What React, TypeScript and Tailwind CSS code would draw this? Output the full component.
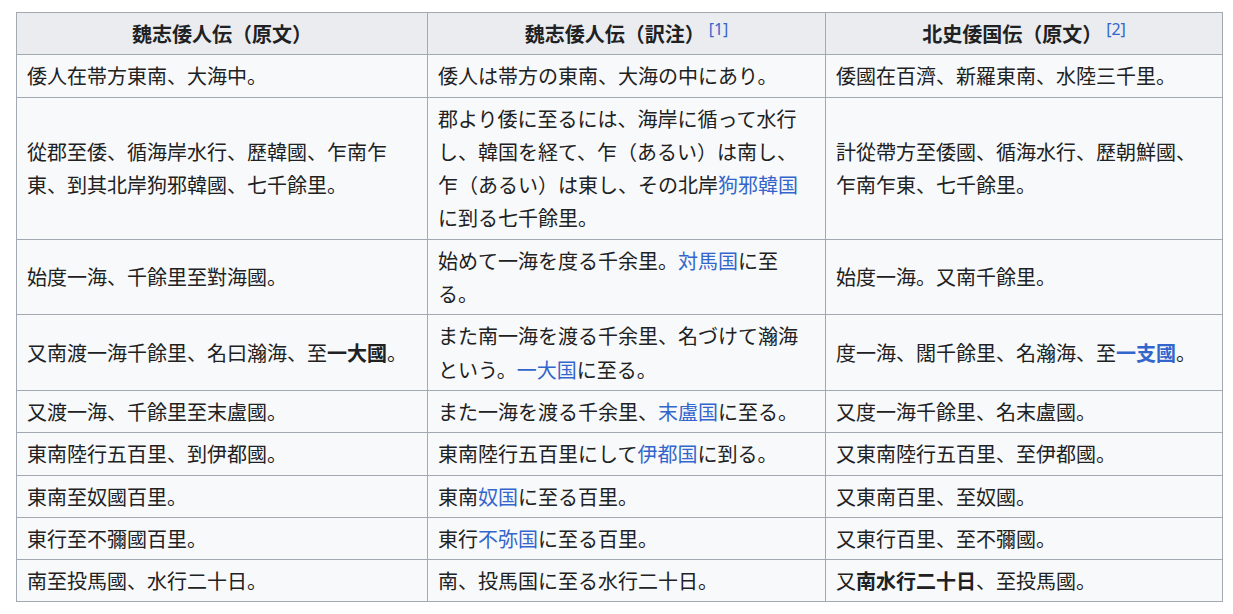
import type { ReactNode } from 'react';

type Row = [ReactNode, ReactNode, ReactNode];

const L = ({ children }: { children: ReactNode }) => <a className="text-[#3366cc]">{children}</a>;

const ROWS: Row[] = [
  ['倭人在帯方東南、大海中。', '倭人は帯方の東南、大海の中にあり。', '倭國在百濟、新羅東南、水陸三千里。'],
  [
    '從郡至倭、循海岸水行、歷韓國、乍南乍東、到其北岸狗邪韓國、七千餘里。',
    <>郡より倭に至るには、海岸に循って水行し、韓国を経て、乍（あるい）は南し、乍（あるい）は東し、その北岸<L>狗邪韓国</L>に到る七千餘里。</>,
    '計從帶方至倭國、循海水行、歷朝鮮國、乍南乍東、七千餘里。',
  ],
  ['始度一海、千餘里至對海國。', <>始めて一海を度る千余里。<L>対馬国</L>に至る。</>, '始度一海。又南千餘里。'],
  [
    <>又南渡一海千餘里、名曰瀚海、至<b>一大國</b>。</>,
    <>また南一海を渡る千余里、名づけて瀚海という。<L>一大国</L>に至る。</>,
    <>度一海、闊千餘里、名瀚海、至<b><L>一支國</L></b>。</>,
  ],
  ['又渡一海、千餘里至末盧國。', <>また一海を渡る千余里、<L>末盧国</L>に至る。</>, '又度一海千餘里、名末盧國。'],
  ['東南陸行五百里、到伊都國。', <>東南陸行五百里にして<L>伊都国</L>に到る。</>, '又東南陸行五百里、至伊都國。'],
  ['東南至奴國百里。', <>東南<L>奴国</L>に至る百里。</>, '又東南百里、至奴國。'],
  ['東行至不彌國百里。', <>東行<L>不弥国</L>に至る百里。</>, '又東行百里、至不彌國。'],
  ['南至投馬國、水行二十日。', '南、投馬国に至る水行二十日。', <>又<b>南水行二十日</b>、至投馬國。</>],
];

function Ref({ n }: { n: number }) {
  return (
    <span className="relative -top-[7px] ml-[4px] align-baseline text-[16px] font-normal leading-none text-[#3366cc] font-['Noto_Sans',sans-serif]">
      [{n}]
    </span>
  );
}

export default function App() {
  const th = 'border border-[#a2a9b1] bg-[#eaecf0] px-[10px] py-[4px] text-center font-bold';
  const td = 'border border-[#a2a9b1] px-[10px] py-[4px] align-middle';
  return (
    <div className="min-h-screen bg-white pl-[16px] pt-[12px] font-['Noto_Sans_CJK_JP','Noto_Sans',sans-serif] text-[20px] leading-[33.3px] text-[#202122]">
      <table className="w-[1206px] table-fixed border-collapse bg-[#f8f9fa]">
        <colgroup>
          <col className="w-[411px]" />
          <col className="w-[398px]" />
          <col className="w-[397px]" />
        </colgroup>
        <thead>
          <tr>
            <th className={th}>魏志倭人伝（原文）</th>
            <th className={th}>
              魏志倭人伝（訳注）<Ref n={1} />
            </th>
            <th className={th}>
              北史倭国伝（原文）<Ref n={2} />
            </th>
          </tr>
        </thead>
        <tbody>
          {ROWS.map((r, i) => (
            <tr key={i}>
              <td className={td}>{r[0]}</td>
              <td className={td}>{r[1]}</td>
              <td className={td}>{r[2]}</td>
            </tr>
          ))}
        </tbody>
      </table>
    </div>
  );
}
